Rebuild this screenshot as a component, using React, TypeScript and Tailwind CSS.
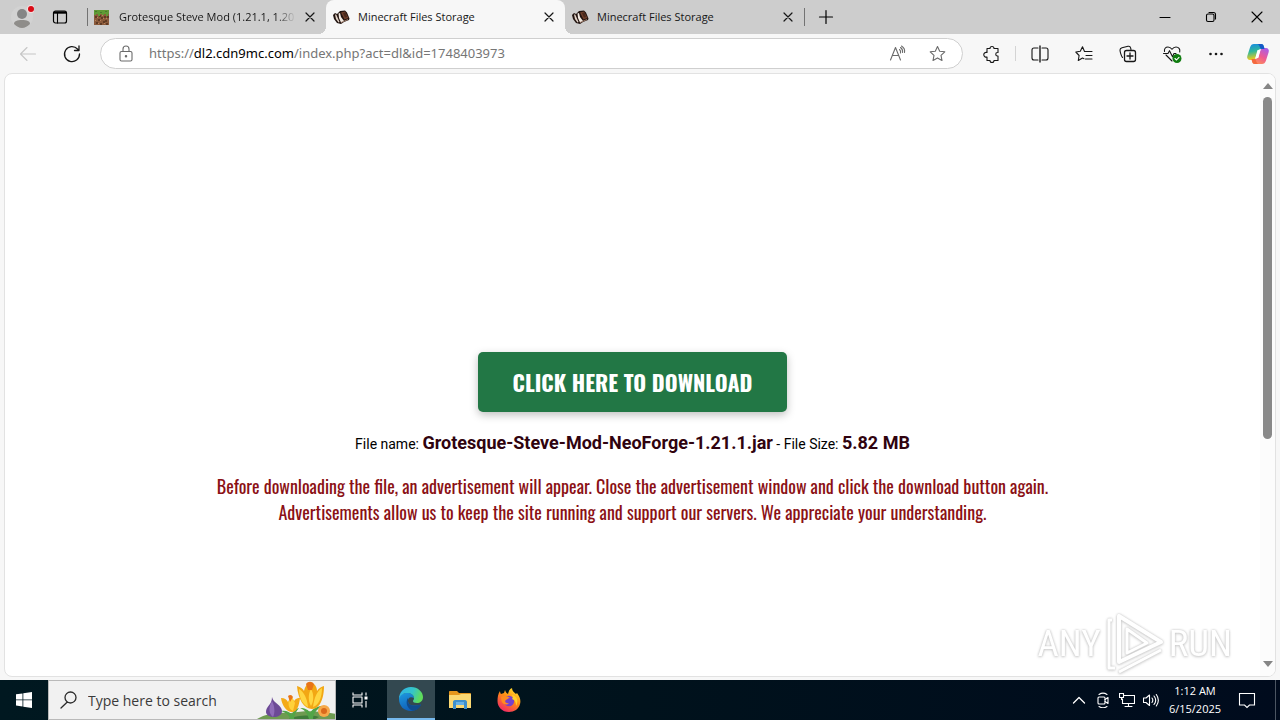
import type { ReactNode } from "react";

type IconProps = { size?: string; box?: string; children: ReactNode; className?: string };

function Icon({ size = "size-5", box = "0 0 20 20", className = "", children }: IconProps) {
  return (
    <svg
      aria-hidden="true"
      viewBox={box}
      className={`${size} shrink-0 ${className}`}
      fill="none"
      stroke="currentColor"
      strokeWidth="1.1"
      strokeLinecap="round"
      strokeLinejoin="round"
    >
      {children}
    </svg>
  );
}

const star = "M9.5 2.5 11.7 7.2 16.8 7.8 13 11.3 14 16.5 9.5 13.9 5 16.5 6 11.3 2.2 7.8 7.3 7.2Z";

function GrassBlock() {
  const dark = [[1, 6], [4, 9], [7, 7], [11, 10], [13, 6], [2, 12], [6, 13], [9, 11], [12, 13], [5, 5], [10, 6]];
  const light = [[3, 7], [6, 10], [9, 8], [1, 10], [12, 8], [4, 13], [10, 13], [8, 5]];
  return (
    <svg aria-hidden="true" viewBox="0 0 17 15" className="h-[15px] w-[17px] shrink-0" shapeRendering="crispEdges">
      <path fill="#8a5a3b" d="M0 0h15v15H0z" />
      {dark.map(([x, y]) => <path key={`d${x}-${y}`} fill="#5f3b24" d={`M${x} ${y}h2v2h-2z`} />)}
      {light.map(([x, y]) => <path key={`l${x}-${y}`} fill="#b9835c" d={`M${x} ${y}h1v1h-1z`} />)}
      <path fill="#5f9a35" d="M0 0h15v4h-1v2h-2V4h-2v1H8V4H6v2H4V4H2v1H0z" />
      <path fill="#48792a" d="M1 1h2v1H1zM6 2h2v1H6zM11 1h2v1h-2z" />
    </svg>
  );
}

function BookIcon() {
  return (
    <svg aria-hidden="true" viewBox="0 0 17 16" className="h-4 w-[17px] shrink-0">
      <path fill="#21130f" d="M0 6l2-2 2 1 3-3 5-.5 2 2 2.500 6L16 11l-5 2-3 2-4-1-3-4z" />
      <path fill="#6f3f2c" d="m8 3.500 4-1 3.500 6.500-4 1.500z" />
      <path fill="#4a281b" d="m10 4 2.500-.5L14 8l-2 .5z" />
      <path fill="#e2d3c8" d="m2 5.500 1.200 0L6.500 13l-1 .5L3 10z" />
      <path fill="#f4ebe3" d="M5.500 4.500 7 4l1 4 3 4-3 1.500L6 9z" />
      <path stroke="#b08a76" strokeWidth="0.800" d="m8 13.500 7-3" />
    </svg>
  );
}

function CloseMark() {
  return (
    <Icon size="size-3" box="0 0 12 12" className="text-neutral-900">
      <path strokeWidth="1.2" d="m2 2 8 8M10 2l-8 8" />
    </Icon>
  );
}

type TabProps = { title: string; active?: boolean; icon: ReactNode; fade?: boolean };

function Tab({ title, active = false, icon, fade = false }: TabProps) {
  return (
    <div
      role="tab"
      aria-selected={active}
      className={`relative flex w-[239px] items-center gap-2 pr-2.5 pl-[7px] ${
        active
          ? "rounded-t-lg bg-[#f7f7f7] before:absolute before:bottom-0 before:-left-2 before:size-2 before:bg-[radial-gradient(circle_at_0_0,transparent_8px,#f7f7f7_8px)] after:absolute after:-right-2 after:bottom-0 after:size-2 after:bg-[radial-gradient(circle_at_100%_0,transparent_8px,#f7f7f7_8px)]"
          : ""
      }`}
    >
      {icon}
      <span
        className={`min-w-0 flex-1 text-[11px] whitespace-nowrap text-neutral-900 ${
          fade ? "[mask-image:linear-gradient(to_right,#000_88%,transparent)]" : ""
        }`}
      >
        {title}
      </span>
      <button type="button" aria-label={`Close ${title}`}>
        <CloseMark />
      </button>
    </div>
  );
}

function TitleBar() {
  return (
    <header className="flex h-[34px] items-stretch bg-[#cdcdcd]">
      <button type="button" aria-label="Profile" className="flex w-11 items-center justify-center">
        <svg aria-hidden="true" viewBox="0 0 24 24" className="size-6">
          <circle cx="12" cy="12" r="11" fill="#d2d2d2" />
          <circle cx="12" cy="9" r="5" fill="#858585" />
          <path fill="#8f8d8a" d="M4 19c0-3 3-4 8-4s8 1 8 4c-2 2-5 4-8 4s-6-2-8-4z" />
          <circle cx="21" cy="4" r="4" fill="#f4dede" />
          <circle cx="21" cy="4" r="3" fill="#d90b16" />
        </svg>
      </button>
      <button type="button" aria-label="Tab actions" className="flex w-8 items-center justify-center">
        <Icon size="size-4" box="0 0 16 16" className="text-black">
          <rect x="1.5" y="2" width="13" height="12" rx="2" strokeWidth="1.2" />
          <path strokeWidth="2.4" strokeLinecap="butt" d="M2 3.5h12" />
          <path d="M5.5 4v10" />
        </Icon>
      </button>
      <div role="tablist" aria-label="Open tabs" className="flex pl-[11px]">
        <span className="my-2 -mr-px w-px bg-neutral-500" />
        <Tab title="Grotesque Steve Mod (1.21.1, 1.20" icon={<GrassBlock />} fade />
        <Tab title="Minecraft Files Storage" icon={<BookIcon />} active />
        <Tab title="Minecraft Files Storage" icon={<BookIcon />} />
        <span className="my-2 w-px bg-neutral-500" />
      </div>
      <button type="button" aria-label="New tab" className="flex w-[42px] items-center justify-center text-black">
        <Icon size="size-4" box="0 0 16 16">
          <path strokeWidth="1.2" d="M8 1.5v13M1.500 8h13" />
        </Icon>
      </button>
      <div className="ml-auto flex text-black">
        <button type="button" aria-label="Minimize" className="flex w-[46px] items-center justify-center">
          <Icon size="size-3" box="0 0 12 12"><path d="M1 6.500h10" /></Icon>
        </button>
        <button type="button" aria-label="Restore" className="flex w-[46px] items-center justify-center">
          <Icon size="size-3" box="0 0 12 12">
            <rect x="1.500" y="3" width="7.500" height="7.500" rx="1.500" />
            <path d="M4 1.500h4.500a2 2 0 0 1 2 2V8" />
          </Icon>
        </button>
        <button type="button" aria-label="Close" className="flex w-[46px] items-center justify-center">
          <Icon size="size-3" box="0 0 12 12"><path d="m1 1 10 10M11 1 1 11" /></Icon>
        </button>
      </div>
    </header>
  );
}

function ToolButton({ label, children }: { label: string; children: ReactNode }) {
  return (
    <button type="button" aria-label={label} className="flex w-11 items-center justify-center text-neutral-900">
      {children}
    </button>
  );
}

function CopilotIcon() {
  return (
    <svg aria-hidden="true" viewBox="0 0 24 24" className="size-6">
      <defs>
        <linearGradient id="cpA" x1="0" y1="0" x2="0.2" y2="1">
          <stop offset="0" stopColor="#1688e8" />
          <stop offset="0.5" stopColor="#30b89b" />
          <stop offset="1" stopColor="#f5cb18" />
        </linearGradient>
        <linearGradient id="cpB" x1="0.8" y1="0" x2="0.2" y2="1">
          <stop offset="0" stopColor="#a95de8" />
          <stop offset="0.5" stopColor="#ef5a91" />
          <stop offset="1" stopColor="#ff9650" />
        </linearGradient>
      </defs>
      <path fill="url(#cpA)" d="M8 2h7c2 0 2.500 1.300 3 3l.5 2H15c-2 0-3 1-3.600 3l-1.500 5c-.6 2-1.700 3-3.600 3H4c-2 0-3.400-1.700-2.700-4L4 5.500C4.800 3 6 2 8 2z" />
      <path fill="url(#cpB)" d="M16 22H9c-2 0-2.500-1.300-3-3l-.5-2H9c2 0 3-1 3.600-3l1.500-5c.6-2 1.700-3 3.600-3H20c2 0 3.400 1.700 2.700 4L20 18.500c-.8 2.500-2 3.500-4 3.500z" />
      <path fill="#1459c7" d="M11 2h4c2 0 2.500 1.300 3 3l.5 2h-3C13.500 7 14 2 11 2z" />
      <path fill="#f4683f" d="M13 22H9c-2 0-2.500-1.300-3-3l-.5-2h3c2 0 1.500 5 4.500 5z" />
      <path fill="#fff" d="M11.500 8h3l-2.200 8h-3z" />
    </svg>
  );
}

function Toolbar() {
  return (
    <nav aria-label="Browser toolbar" className="flex h-[39px] items-stretch">
      <div className="flex w-[100px] pl-1.5">
        <button type="button" aria-label="Back" className="flex w-11 items-center justify-center text-[#c6c6c6]">
          <Icon><path d="M17.500 10h-15M9 3.500 2.500 10 9 16.500" /></Icon>
        </button>
        <button type="button" aria-label="Refresh" className="flex w-11 items-center justify-center text-neutral-900">
          <Icon><path strokeWidth="1.300" d="M17.500 10A7.500 7.500 0 1 1 15.500 5l1.500 1.500M17 2v4.500h-4.500" /></Icon>
        </button>
      </div>
      <div className="my-1 flex min-w-0 flex-1 items-center rounded-full border border-[#cfcfcf] bg-white pr-3.5 pl-[15px] text-[#6b6b6b]">
        <Icon>
          <rect x="4" y="7.500" width="12" height="9.500" rx="1.500" />
          <path d="M7 7.500V5a3 3 0 0 1 6 0v2.500" />
          <circle cx="10" cy="12.200" r="0.700" fill="currentColor" />
        </Icon>
        <a
          href="https://dl2.cdn9mc.com/index.php?act=dl&id=1748403973"
          className="min-w-0 flex-1 truncate pl-[13px] font-['Noto_Sans',sans-serif] text-[13px] text-[#767676]"
        >
          https://<span className="text-black">dl2.cdn9mc.com</span>/index.php?act=dl&amp;id=1748403973
        </a>
        <button type="button" aria-label="Read aloud" className="mr-5">
          <Icon>
            <path d="m2.500 16 5-12.500L12.500 16M4.300 11.500h6.500M11.500 5.500c1 .8 1.300 2 1 3.500M12.500 3.500c1.800 1.200 2.400 3 2 5M13.500 2c2.500 1.500 3.500 4 3 6.500" />
          </Icon>
        </button>
        <button type="button" aria-label="Add to favorites">
          <Icon><path d={star} /></Icon>
        </button>
      </div>
      <div className="flex pl-2">
        <ToolButton label="Extensions">
          <Icon>
            <path d="M4 4.500h3a2 2 0 1 1 4 0h4v4h-.5a1.700 1.700 0 0 0 0 3.500h.5v4.500h-4a2 2 0 0 1-4 0H4V13a2.400 2.400 0 1 1 0-4.500z" />
          </Icon>
        </ToolButton>
        <span className="my-3 mr-0.5 w-px bg-neutral-300" />
        <ToolButton label="Split screen">
          <Icon>
            <path d="M8 4H4a2 2 0 0 0-2 2v8c0 1 1 2 2 2h4M12 4h4a2 2 0 0 1 2 2v8c0 1-1 2-2 2h-4" />
            <path strokeWidth="1.400" d="M10 2v16" />
          </Icon>
        </ToolButton>
        <ToolButton label="Favorites">
          <Icon>
            <path d="M10.500 7.500 8.500 2.800 6.300 7.300l-4.500.7 3.300 3.500-.8 5 4.200-2.400 1.500.6M10.500 7.500H18M12 11.500h6M11.500 15H18" />
          </Icon>
        </ToolButton>
        <ToolButton label="Collections">
          <Icon>
            <path d="M4.500 13.500C3.300 12.500 2 7.500 2 6s1-2 2-2.300l6-1.400c1.300-.3 2.300.2 2.600 1.500l.4 1.700" />
            <rect x="6.500" y="6.500" width="11" height="11" rx="2" strokeWidth="1.300" />
            <path strokeWidth="1.300" d="M12 9v6M9 12h6" />
          </Icon>
        </ToolButton>
        <ToolButton label="Browser essentials">
          <Icon>
            <path d="M2.500 7.500C2 4.800 3.500 3 6 3c2 0 3.200 1.200 4 2.300C10.800 4.200 12 3 14 3c2.600 0 4.400 2.200 3.700 5M4 11l6 6M1.500 9.500H6l1.500-2.800 3 6L12 9.500h2" />
            <circle cx="15" cy="14.500" r="4.500" fill="#107c10" stroke="none" />
            <path stroke="#fff" d="m13 14.500 1.500 1.500L17 13.300" />
          </Icon>
        </ToolButton>
        <ToolButton label="Settings and more">
          <Icon>
            <g fill="currentColor" stroke="none">
              <circle cx="4.500" cy="10" r="1.300" /><circle cx="10" cy="10" r="1.300" /><circle cx="15.500" cy="10" r="1.300" />
            </g>
          </Icon>
        </ToolButton>
        <button type="button" aria-label="Copilot" className="mr-0.5 flex w-10 items-center justify-center">
          <CopilotIcon />
        </button>
      </div>
    </nav>
  );
}

function Watermark() {
  return (
    <div className="pointer-events-none absolute right-[43px] bottom-0 flex items-center gap-1 font-['Liberation_Sans_Narrow','Roboto_Condensed','Liberation_Sans',sans-serif] text-[37px] text-white [filter:drop-shadow(0_0_1px_#c4c4c4)_drop-shadow(0_1px_1px_#dcdcdc)]">
      <span>ANY</span>
      <svg aria-hidden="true" viewBox="0 0 60 64" className="h-16 w-[60px]" fill="none" stroke="#fff" strokeWidth="4" strokeLinejoin="round">
        <path d="M14 4v46l42-20zM14 4l42 26" />
        <path d="M7 8H4v48h6M14 60l42-22M22 17v24l20-10z" strokeWidth="3" />
      </svg>
      <span>RUN</span>
    </div>
  );
}

function DownloadPage() {
  return (
    <div className="relative mx-1 mb-[3px] flex flex-1 overflow-hidden rounded-lg border border-[#e2e2e2] bg-white">
      <main className="flex min-w-0 flex-1 flex-col items-center pt-[278px] text-center font-[Roboto,sans-serif]">
        <button
          type="button"
          className="h-[60px] rounded-[5px] bg-[#227745] px-[35px] font-[Oswald,'Roboto_Condensed',sans-serif] text-[22px] font-bold text-white shadow-[0_3px_8px_rgba(0,0,0,0.25)]"
        >
          CLICK HERE TO DOWNLOAD
        </button>
        <p className="mt-[17px] text-[14px] leading-7 text-black">
          File name: <strong className="text-[18px] font-bold text-[#30030f]">Grotesque-Steve-Mod-NeoForge-1.21.1.jar</strong> - File Size:{" "}
          <strong className="text-[18px] font-bold text-[#30030f]">5.82 MB</strong>
        </p>
        <p className="mt-[15px] font-[Oswald,'Roboto_Condensed',sans-serif] text-[18px] leading-[26px] text-[#8b1115]">
          Before downloading the file, an advertisement will appear. Close the advertisement window and click the download button again.
          <br />
          Advertisements allow us to keep the site running and support our servers. We appreciate your understanding.
        </p>
      </main>
      <div aria-hidden="true" className="flex w-[15px] flex-col items-center bg-[#fcfcfc] py-[9px]">
        <svg viewBox="0 0 10 6" className="h-1.5 w-2.5"><path fill="#858585" d="M0 6 5 0l5 6z" /></svg>
        <div className="mt-2 flex-1"><div className="h-[342px] w-[9px] rounded-full bg-[#898989]" /></div>
        <svg viewBox="0 0 10 6" className="h-1.5 w-2.5"><path fill="#858585" d="M0 0h10L5 6z" /></svg>
      </div>
      <Watermark />
    </div>
  );
}

function Flowers() {
  return (
    <svg aria-hidden="true" viewBox="0 0 78 38" className="h-[38px] w-[78px] shrink-0">
      <path fill="#6e9b51" d="M0 38c10-6 22-7 34-6 14-3 30-2 46 1v5z" />
      <path fill="#3f7d3a" d="M32 38c4-3 22-5 30-2l-4 2z" />
      <path fill="#51a548" d="M33 38c-1-5-6-7-9-8 5-1 9 1 11 4 1-4 3-6 7-7-3 4-5 7-5 11zM52 38c-2-7-6-10-9-11 5 0 9 2 10 5 3-5 8-7 12-7-6 4-9 8-9 13z" />
      <path fill="#6c4a96" d="M15 16c1 6 10 8 10 14 0 4-4 6-8 6s-8-2-8-5c0-6 6-7 6-15z" />
      <path fill="#8e6cb8" d="M15 20c3 6 3 12 1 16-4-3-5-9-1-16z" />
      <path fill="#f4aa17" d="M24 17c4 0 6 2 7 4l3-6 3 5c2-3 4-3 6-3-1 8-3 14-8 14s-10-6-11-14z" />
      <path fill="#ffd13a" d="m34 14 4 8-2 8c-5-2-6-9-2-16z" />
      <path fill="#f2a714" d="M40 5c4 1 6 3 7 5 1-4 2-6 4-7h6c2 2 3 4 3 7 2-3 4-4 7-5 0 12-4 23-12 23S41 18 40 5z" />
      <path fill="#ffd642" d="M42 8c5 3 8 9 9 18-5-2-9-9-9-18zM65 7c-5 3-8 10-9 19 6-2 9-10 9-19zM54 8c3 5 3 12 0 17-3-5-3-12 0-17z" />
      <path fill="#e87418" d="M49 3c2-3 6-3 8 0l-2 6h-4zM31 15c2-2 4-1 5 1l-3 5z" />
      <circle cx="67" cy="30" r="6" fill="#f6a84a" />
      <circle cx="67" cy="30" r="3" fill="#d96a1c" />
    </svg>
  );
}

function EdgeIcon() {
  return (
    <svg aria-hidden="true" viewBox="0 0 24 24" className="size-6">
      <defs>
        <linearGradient id="edA" x1="0" y1="0" x2="1" y2="0.3">
          <stop offset="0" stopColor="#2fb0ea" /><stop offset="0.600" stopColor="#35c5c9" /><stop offset="1" stopColor="#5fdc5b" />
        </linearGradient>
        <linearGradient id="edB" x1="0" y1="0" x2="0.5" y2="1">
          <stop offset="0" stopColor="#1e9ae0" /><stop offset="1" stopColor="#0f5cb5" />
        </linearGradient>
      </defs>
      <path fill="url(#edB)" d="M0 12C0 8 4 6 8 6c4 0 7 2 7 5-4-2-6 0-6 3 0 4 5 6 13 3.500C20 21.500 16 24 12 24 5 24 0 19 0 12z" />
      <path fill="url(#edA)" d="M0 12C0 5 5 0 12 0s12 5 12 10c0 4-3 6-6 6-3 0-4-1-4-2 0-.8 1-1 1-3 0-3-3-5-7-5-4 0-7 2.500-8 6z" />
      <path fill="#114a8b" d="M9 11c-3 4-1 11 5 12.800 4-.5 7-3 8-6.300C14 20 9 18 9 14z" />
    </svg>
  );
}

function FolderIcon() {
  return (
    <svg aria-hidden="true" viewBox="0 0 24 20" className="h-5 w-6">
      <path fill="#e5961c" d="M1 2c0-1 .5-1 1-1h7l2 2h11c.6 0 1 .4 1 1v3H1z" />
      <path fill="#fbd872" d="M1 5h10l2-1h9c1 0 1 .5 1 1v13H1z" />
      <path fill="#3e8fcb" d="M5 19v-7c0-1 .7-2 2-2h10c1.300 0 2 1 2 2v7h-3v-4H8v4z" />
      <path fill="#66b1e6" d="M8 12h8v3H8z" />
    </svg>
  );
}

function FirefoxIcon() {
  return (
    <svg aria-hidden="true" viewBox="0 0 24 24" className="size-6">
      <defs>
        <linearGradient id="ffA" x1="0.8" y1="0" x2="0.2" y2="1">
          <stop offset="0" stopColor="#ffe52e" /><stop offset="0.450" stopColor="#ff8a16" /><stop offset="1" stopColor="#f0206c" />
        </linearGradient>
      </defs>
      <path fill="url(#ffA)" d="M3 3c0 1.500.6 2.300 1 3l3-1 1-3c.5 2 1.500 3 3 4 1-4 2-5 4-6 0 3 2 4 4 6l1-1c3 4 4 7 3 11-1 5-6 8-11 8C5 24 .5 19 .5 13 .5 9 1 6 3 3z" />
      <circle cx="12" cy="13" r="5.200" fill="#7541cf" />
      <path fill="#ff8b20" d="M4 9c3-2 7-1 9 1-2 .2-3 1.500-4 2-2 1 0 4 3 3-2 3-7 1-7.500-2z" />
      <path fill="#ffd02c" d="M15 7c5 1 7 6 4 11 0-4-1-6-4-7 1-1 1-2 0-4z" />
    </svg>
  );
}

function Taskbar() {
  return (
    <footer className="flex h-10 items-stretch bg-[linear-gradient(to_right,#001820,#00121c_50%,#000b1d)] text-white">
      <button type="button" aria-label="Start" className="flex w-12 items-center justify-center">
        <svg aria-hidden="true" viewBox="0 0 16 16" className="size-4">
          <path fill="#fff" d="M0 2.300 6.500 1.400v6.100H0zM7.300 1.300 16 0v7.500H7.300zM0 8.300h6.500v6.200L0 13.600zM7.300 8.300H16V16l-8.700-1.300z" />
        </svg>
      </button>
      <label className="flex w-72 items-center border border-[#b9b9b9] bg-[#f1f1f1] pl-2.5 text-[#2b2b2b]">
        <Icon><path strokeWidth="1.300" d="M7.800 12.500 2 18M17 7.500a5.500 5.500 0 1 1-11 0 5.500 5.500 0 0 1 11 0z" /></Icon>
        <input
          type="text"
          aria-label="Search"
          placeholder="Type here to search"
          className="min-w-0 flex-1 bg-transparent pl-[9px] text-[14px] outline-none placeholder:text-[#3a3a3a]"
        />
        <Flowers />
      </label>
      <button type="button" aria-label="Task view" className="mr-[3px] flex w-12 items-center justify-center">
        <Icon size="size-4" box="0 0 16 16">
          <path strokeLinecap="butt" d="M1 .5V3h9V.5M1 15.500V13h9v2.500M1 5h9v6H1zM14 .5v3M14 9v6.500" />
          <path fill="#fff" stroke="none" d="M12.500 4.500h3v3h-3z" />
        </Icon>
      </button>
      <button type="button" aria-label="Microsoft Edge" className="flex w-12 items-center justify-center border-b-2 border-[#76b9ed] bg-[#334850]">
        <EdgeIcon />
      </button>
      <button type="button" aria-label="File Explorer" className="flex w-[49px] items-center justify-center"><FolderIcon /></button>
      <button type="button" aria-label="Firefox" className="flex w-[49px] items-center justify-center"><FirefoxIcon /></button>
      <div className="ml-auto flex items-center">
        <button type="button" aria-label="Show hidden icons" className="flex w-6 justify-center">
          <Icon size="size-4" box="0 0 16 16"><path strokeWidth="1.300" d="m2.500 11 5.500-5.500 5.500 5.500" /></Icon>
        </button>
        <button type="button" aria-label="Meet Now" className="flex w-6 justify-center">
          <Icon size="size-4" box="0 0 16 16">
            <rect x="3" y="5" width="7" height="7" rx="1" /><path d="m10 7.500 3-2v6l-3-2M4 2.500c2.500-1.700 5.500-1.700 8 0M4 14.500c2.500 1.700 5.500 1.700 8 0" />
          </Icon>
        </button>
        <button type="button" aria-label="Network" className="flex w-6 justify-center">
          <Icon size="size-4" box="0 0 16 16">
            <path strokeLinejoin="miter" d="M5 3.500h10.500v8H3.500V7M.5 1.500h4v4h-4zM2.500 5.500v2M9.500 11.500v3M6 14.500h7" />
          </Icon>
        </button>
        <button type="button" aria-label="Volume" className="flex w-6 justify-center">
          <Icon size="size-4" box="0 0 16 16">
            <path d="M.5 6H3l3.500-3v10.500L3 10.500H.5zM9 6c1 1.300 1 3 0 4.500M11 4c2 2.500 2 6 0 8.500M13.300 2.500c2.500 3.500 2.500 8 0 11.500" />
          </Icon>
        </button>
        <time dateTime="2025-06-15T01:12" className="w-16 text-center text-[11px] leading-[18px]">
          1:12 AM
          <br />
          6/15/2025
        </time>
        <button type="button" aria-label="Notifications" className="ml-1 flex w-8 justify-center">
          <Icon size="size-5">
            <path strokeLinejoin="miter" d="M2.500 3.500h15v11.500h-5L10 17.500 7.500 15h-5z" />
          </Icon>
        </button>
        <span className="ml-3 h-10 w-[5px] border-l border-[#4b5562]" />
      </div>
    </footer>
  );
}

export default function App() {
  return (
    <div className="flex min-h-screen flex-col bg-[#f7f7f7] font-['Open_Sans','Noto_Sans',sans-serif]">
      <TitleBar />
      <Toolbar />
      <DownloadPage />
      <Taskbar />
    </div>
  );
}
